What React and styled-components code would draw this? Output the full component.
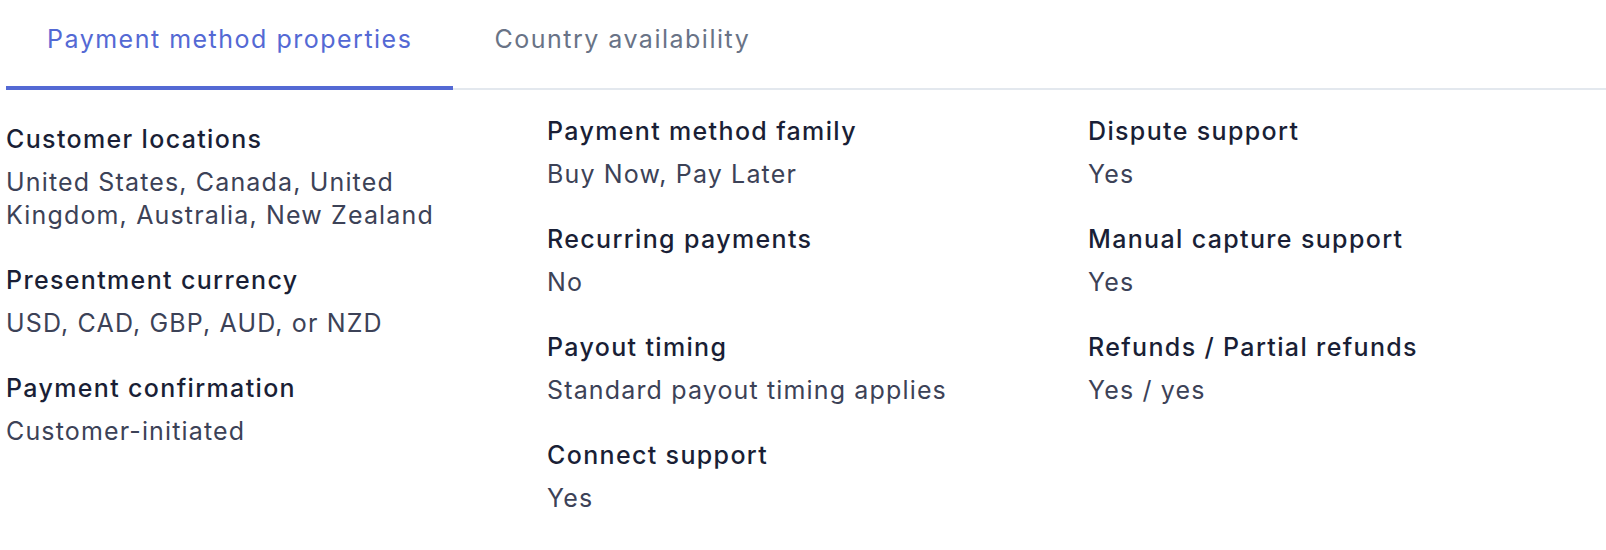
import styled, { createGlobalStyle } from "styled-components"

const GlobalStyle = createGlobalStyle`
  body {
    margin: 0;
    background: #ffffff;
    font-family: Inter, "Noto Sans", "Liberation Sans", sans-serif;
    -webkit-font-smoothing: antialiased;
  }
`

const Page = styled.div`
  padding-left: 6px;
`

const TabList = styled.div`
  display: flex;
  box-shadow: inset 0 -2px 0 #e3e8ee;
`

const Tab = styled.button`
  font-family: inherit;
  font-size: 25px;
  line-height: 34px;
  letter-spacing: 1.5px;
  font-weight: 400;
  background: none;
  border: none;
  border-bottom: 4px solid ${(p) => (p.active ? "#5469d4" : "transparent")};
  color: ${(p) => (p.active ? "#5469d4" : "#697386")};
  padding: 22px 41px 30px;
  cursor: pointer;
`

const Grid = styled.div`
  display: grid;
  grid-template-columns: 541px 541px 1fr;
  padding-top: 23px;
`

const Column = styled.div`
  display: flex;
  flex-direction: column;
  gap: 31px;
  padding-top: ${(p) => p.offset || 0}px;
  padding-right: 60px;
`

const Item = styled.div`
  display: flex;
  flex-direction: column;
  gap: 10px;
`

const Label = styled.div`
  font-size: 25px;
  line-height: 34px;
  letter-spacing: 1.35px;
  font-weight: 500;
  color: #1a1f36;
`

const Value = styled.div`
  font-size: 25px;
  line-height: 33px;
  letter-spacing: 1.15px;
  color: #3c4257;
`

const columns = [
  {
    offset: 9,
    items: [
      ["Customer locations", "United States, Canada, United Kingdom, Australia, New Zealand"],
      ["Presentment currency", "USD, CAD, GBP, AUD, or NZD"],
      ["Payment confirmation", "Customer-initiated"],
    ],
  },
  {
    offset: 1,
    items: [
      ["Payment method family", "Buy Now, Pay Later"],
      ["Recurring payments", "No"],
      ["Payout timing", "Standard payout timing applies"],
      ["Connect support", "Yes"],
    ],
  },
  {
    offset: 1,
    items: [
      ["Dispute support", "Yes"],
      ["Manual capture support", "Yes"],
      ["Refunds / Partial refunds", "Yes / yes"],
    ],
  },
]

export default function App() {
  return (
    <Page>
      <GlobalStyle />
      <TabList>
        <Tab active>Payment method properties</Tab>
        <Tab>Country availability</Tab>
      </TabList>
      <Grid>
        {columns.map((col, i) => (
          <Column key={i} offset={col.offset}>
            {col.items.map(([label, value]) => (
              <Item key={label}>
                <Label>{label}</Label>
                <Value>{value}</Value>
              </Item>
            ))}
          </Column>
        ))}
      </Grid>
    </Page>
  )
}
